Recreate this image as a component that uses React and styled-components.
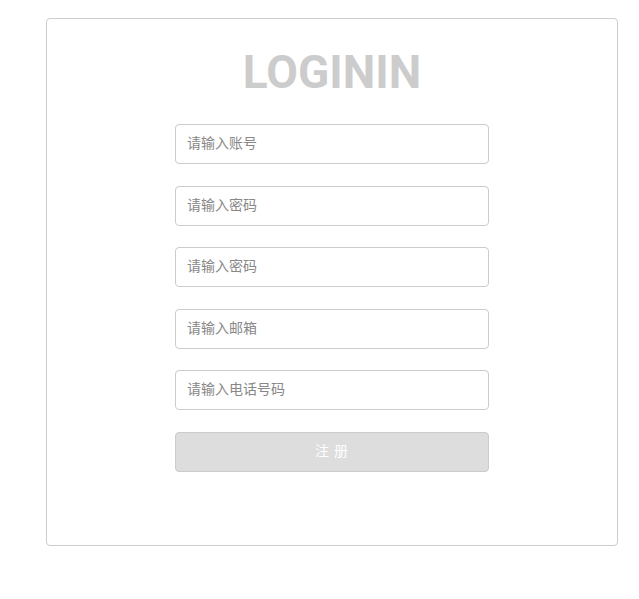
import React from "react"
import styled, { createGlobalStyle } from "styled-components"

const GlobalStyle = createGlobalStyle`
  * { box-sizing: border-box; }
  body {
    margin: 0;
    background: #ffffff;
    font-family: "Noto Sans CJK SC", "Liberation Sans", sans-serif;
  }
`

const Card = styled.div`
  width: 572px;
  height: 528px;
  margin: 18px 0 0 46px;
  padding-top: 30px;
  border: 1px solid #cccccc;
  border-radius: 4px;
  display: flex;
  flex-direction: column;
  align-items: center;
`

const Title = styled.h1`
  margin: 0 0 29px;
  font-family: Roboto, "Liberation Sans", sans-serif;
  font-weight: 700;
  font-size: 46px;
  line-height: 46px;
  color: #cccccc;
`

const Form = styled.form`
  width: 314px;
  display: flex;
  flex-direction: column;
  gap: 21.6px;
`

const Input = styled.input`
  height: 40px;
  width: 100%;
  padding: 0 11px 4px;
  border: 1px solid #cccccc;
  border-radius: 4px;
  font-family: "Noto Sans CJK SC", sans-serif;
  font-size: 14px;
  color: #555555;
  outline: none;

  &::placeholder {
    color: #888888;
  }
`

const Submit = styled.button`
  height: 40px;
  width: 100%;
  padding: 0 0 4px;
  border: 1px solid #cccccc;
  border-radius: 4px;
  background: #dddddd;
  color: #ffffff;
  font-family: "Noto Sans CJK SC", sans-serif;
  font-size: 14px;
  letter-spacing: 1px;
  cursor: pointer;
`

const fields = [
  { type: "text", placeholder: "请输入账号" },
  { type: "password", placeholder: "请输入密码" },
  { type: "password", placeholder: "请输入密码" },
  { type: "email", placeholder: "请输入邮箱" },
  { type: "tel", placeholder: "请输入电话号码" },
]

const App = () => {
  return (
    <>
      <GlobalStyle />
      <Card>
        <Title>LOGININ</Title>
        <Form onSubmit={e => e.preventDefault()}>
          {fields.map((f, i) => (
            <Input key={i} type={f.type} placeholder={f.placeholder} />
          ))}
          <Submit type="submit">注 册</Submit>
        </Form>
      </Card>
    </>
  )
}

export default App
